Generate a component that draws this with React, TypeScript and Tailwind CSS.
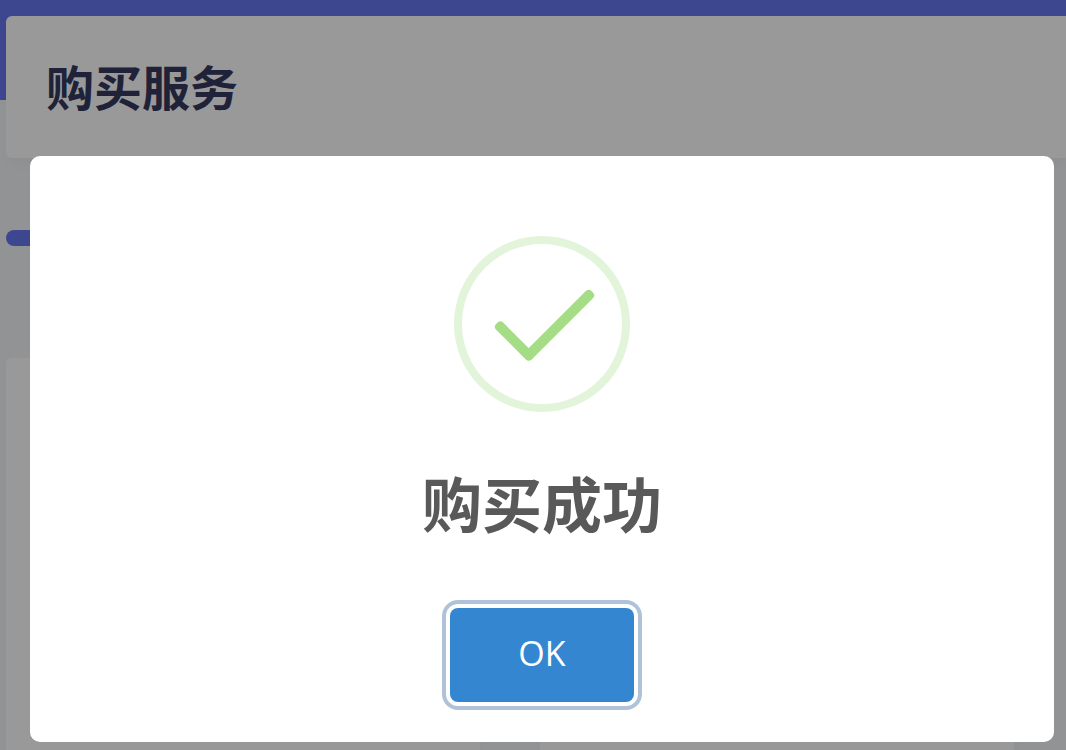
function SuccessIcon() {
  return (
    <svg viewBox="0 0 176 176" className="size-44" aria-hidden="true">
      <circle cx="88" cy="88" r="84" fill="none" stroke="#e2f4da" strokeWidth="8" />
      <g fill="#a5dc86">
        <rect x="35.5" y="100" width="50" height="10" rx="4" transform="rotate(45 60.5 105)" />
        <rect x="58" y="84" width="94" height="10" rx="4" transform="rotate(-45 105 89)" />
      </g>
    </svg>
  );
}

function SuccessDialog() {
  return (
    <div className="fixed inset-0 flex items-end bg-black/40 pb-2 pl-[30px] pr-3">
      <div
        role="dialog"
        aria-modal="true"
        aria-labelledby="dialog-title"
        className="flex w-full flex-col items-center rounded-[10px] bg-white px-10 pb-10 pt-20"
      >
        <SuccessIcon />
        <h2 id="dialog-title" className="mt-12 text-[60px] font-bold leading-[90px] text-[#595959]">
          购买成功
        </h2>
        <button
          type="button"
          autoFocus
          className="mt-[58px] h-[94px] w-[184px] rounded-lg bg-[#3586d1] pb-1 text-[34px] font-medium text-white shadow-[0_0_0_4px_#fff,0_0_0_8px_#afc2d8] outline-none"
        >
          OK
        </button>
      </div>
    </div>
  );
}

export default function App() {
  return (
    <div className="relative flex h-screen flex-col overflow-hidden bg-[#f4f6f9] font-['Open_Sans','Noto_Sans_CJK_SC',sans-serif]">
      <div className="h-[100px] shrink-0 bg-[#6777ef]" />
      <main className="-mt-[84px] flex grow flex-col pl-1.5">
        <header className="flex h-[142px] shrink-0 items-center rounded-l-md bg-white px-10 pt-0.5 shadow-[0_8px_16px_rgba(0,0,0,0.03)]">
          <h1 className="text-[48px] font-bold leading-[56px] text-[#34395e]">购买服务</h1>
        </header>
        <div className="mt-[72px] h-4 w-[60px] shrink-0 rounded-full bg-[#6777ef]" />
        <div className="mt-28 grid grow grid-cols-[474px_474px] gap-[60px]">
          <section className="rounded-t-md bg-white shadow-[0_8px_16px_rgba(0,0,0,0.03)]" />
          <section className="rounded-t-md bg-white shadow-[0_8px_16px_rgba(0,0,0,0.03)]" />
        </div>
      </main>
      <SuccessDialog />
    </div>
  );
}
